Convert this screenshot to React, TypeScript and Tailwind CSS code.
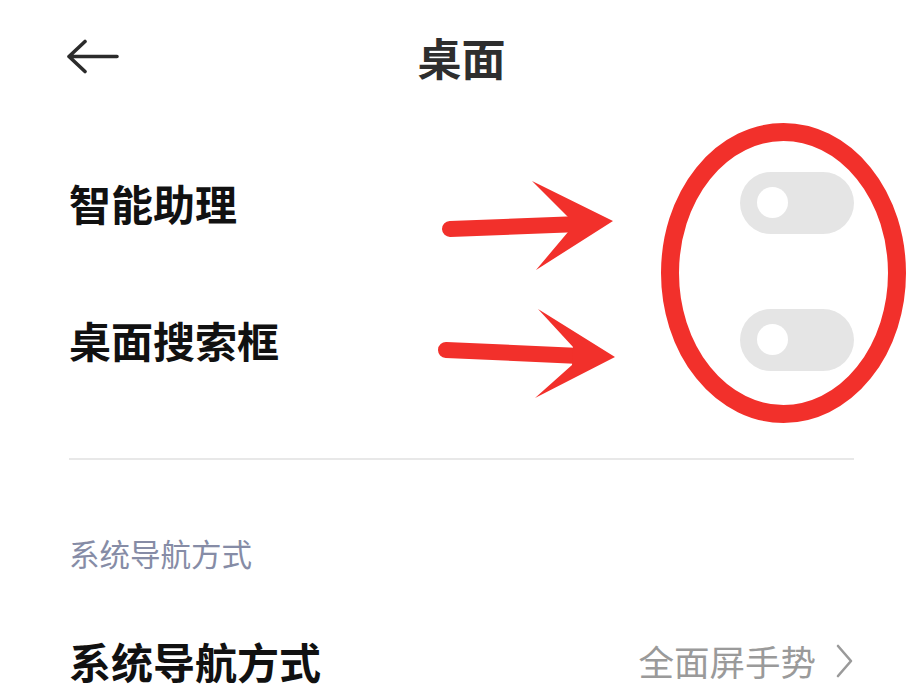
import React from "react";

const CJK = { fontFamily: '"Noto Sans CJK SC", "Noto Sans", sans-serif' };

function Toggle() {
  return (
    <div className="w-[114px] h-[62px] rounded-full bg-[#e5e5e5] flex items-center">
      <div className="w-[31px] h-[31px] rounded-full bg-white ml-[17px]" />
    </div>
  );
}

export default function App() {
  return (
    <div className="relative w-[923px] h-[695px] bg-white overflow-hidden" style={CJK}>
      {/* Header */}
      <div className="grid grid-cols-[1fr_auto_1fr] items-center h-[114px] px-[66px]">
        <svg width="54" height="36" viewBox="0 0 54 36" fill="none" className="block">
          <path d="M3 17.5 H51 M3 17.5 L19 2.5 M3 17.5 L19 32.5" stroke="#2b2b2b" strokeWidth="3.6" strokeLinecap="round" strokeLinejoin="round" />
        </svg>
        <div className="text-[44px] leading-none font-semibold text-[#2e2e2e]">桌面</div>
        <div />
      </div>

      {/* Toggle rows */}
      <div className="px-[69px] pt-[20px]">
        <div className="flex items-center justify-between h-[137px]">
          <span className="text-[42px] leading-none font-semibold text-[#111]">智能助理</span>
          <Toggle />
        </div>
        <div className="flex items-center justify-between h-[137px]">
          <span className="text-[42px] leading-none font-semibold text-[#111]">桌面搜索框</span>
          <Toggle />
        </div>
        <div className="mt-[50px] h-[2px] bg-[#e8e8e8]" />
        <div className="flex items-center h-[60px] mt-[63px]">
          <span className="text-[30.5px] leading-none text-[#868ca6]">系统导航方式</span>
        </div>
        <div className="flex items-center justify-between h-[76px] mt-[40px]">
          <span className="text-[42px] leading-none font-semibold text-[#111]">系统导航方式</span>
          <div className="flex items-center gap-[20px]">
            <span className="text-[35.5px] leading-none text-[#9a9a9a]">全面屏手势</span>
            <svg width="18" height="34" viewBox="0 0 18 34" fill="none" className="block">
              <path d="M2 2 L15 17 L2 32" stroke="#9a9a9a" strokeWidth="2.6" strokeLinecap="round" strokeLinejoin="round" />
            </svg>
          </div>
        </div>
      </div>

      {/* Annotations overlay */}
      <svg className="absolute inset-0 pointer-events-none" width="923" height="695" viewBox="0 0 923 695" fill="none">
        <ellipse cx="783.5" cy="273" rx="113.5" ry="141" stroke="#f2302b" strokeWidth="18" />
        <line x1="450" y1="229" x2="580" y2="224" stroke="#f2302b" strokeWidth="16" strokeLinecap="round" />
        <polygon points="613,221 532,181 568,217 568,232 536,270" fill="#f2302b" />
        <line x1="446" y1="350" x2="580" y2="356" stroke="#f2302b" strokeWidth="16" strokeLinecap="round" />
        <polygon points="615,357 538,309 573,347 572,365 535,398" fill="#f2302b" />
      </svg>
    </div>
  );
}
